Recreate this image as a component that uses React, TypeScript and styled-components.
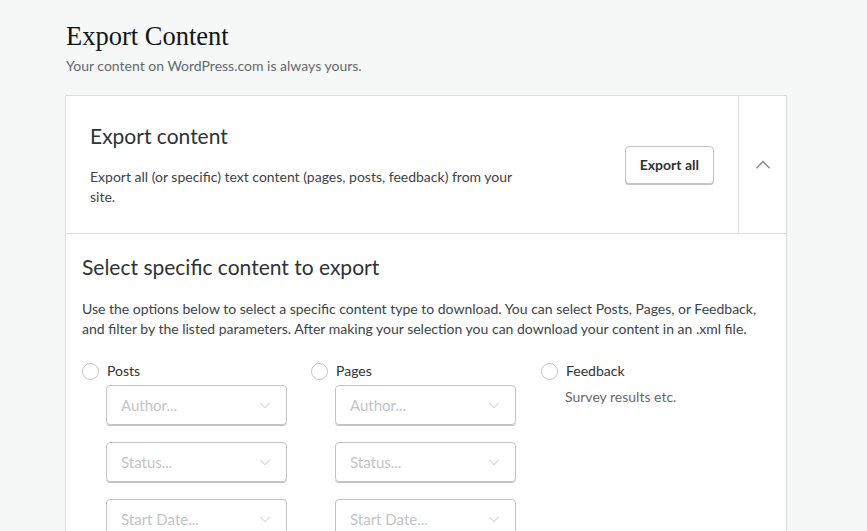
import React from "react";
import styled, { createGlobalStyle } from "styled-components";

const Global = createGlobalStyle`
  html, body { margin: 0; padding: 0; background: #f6f7f7; }
  body { font-family: "Segoe UI", Lato, sans-serif; color: #3c434a; }
  * { box-sizing: border-box; }
`;

const Page = styled.div`
  padding: 20px 81px 0 65px;
`;

const PageHeader = styled.header`
  padding-left: 1px;
  margin-bottom: 19px;
`;

const PageTitle = styled.h1`
  margin: 0;
  font-family: "Liberation Serif", serif;
  font-weight: 400;
  font-size: 26.5px;
  line-height: 32px;
  color: #101517;
`;

const PageSub = styled.p`
  margin: 4px 0 0;
  font-size: 14px;
  line-height: 20px;
  color: #646970;
`;

const Card = styled.section`
  background: #fff;
  border: 1px solid #dcdcde;
  width: 722px;
`;

const Header = styled.div`
  display: flex;
  border-bottom: 1px solid #dcdcde;
  height: 138px;
`;

const HeaderMain = styled.div`
  flex: 1;
  display: flex;
  align-items: center;
  padding: 0 24px 0 24px;
`;

const HeaderText = styled.div`
  flex: 1;
  max-width: 440px;
`;

const CardTitle = styled.h2`
  margin: 0;
  font-weight: 400;
  font-size: 21px;
  line-height: 28px;
  color: #2c3338;
`;

const Desc = styled.p`
  margin: 17px 0 0;
  font-size: 14px;
  line-height: 20px;
  color: #3c434a;
`;

const Button = styled.button`
  font-family: inherit;
  font-size: 14px;
  font-weight: 700;
  color: #2c3338;
  background: #fff;
  border: 1px solid #c3c4c7;
  border-radius: 4px;
  box-shadow: 0 1px 0 #c3c4c7;
  height: 38px;
  padding: 0 14px;
  margin-left: auto;
`;

const Toggle = styled.div`
  width: 48px;
  border-left: 1px solid #dcdcde;
  display: flex;
  align-items: center;
  justify-content: center;
`;

const Body = styled.div`
  padding: 19px 16px 0 16px;
`;

const BodyText = styled.p`
  margin: 18px 0 0;
  font-size: 14px;
  line-height: 20px;
  color: #3c434a;
`;

const Columns = styled.div`
  display: grid;
  grid-template-columns: 229px 230px 1fr;
  margin-top: 22px;
`;

const Column = styled.div`
  display: flex;
  flex-direction: column;
`;

const RadioRow = styled.label`
  display: flex;
  align-items: center;
  gap: 8px;
  font-size: 14px;
  line-height: 20px;
  color: #2c3338;
`;

const Radio = styled.span`
  width: 17px;
  height: 17px;
  border: 1px solid #c3c4c7;
  border-radius: 50%;
  background: #fff;
`;

const Hint = styled.div`
  margin: 6px 0 0 24px;
  font-size: 14px;
  line-height: 20px;
  color: #646970;
`;

const Selects = styled.div`
  display: flex;
  flex-direction: column;
  gap: 17px;
  margin: 4px 0 0 24px;
`;

const Select = styled.div`
  width: 181px;
  height: 40px;
  border: 1px solid #c3c4c7;
  border-radius: 4px;
  box-shadow: 0 1px 0 #c3c4c7;
  display: flex;
  align-items: center;
  justify-content: space-between;
  padding: 0 13px 0 14px;
  font-size: 15px;
  color: #c3c4c7;
`;

const Chevron = ({ up }: { up?: boolean }) => (
  <svg width={up ? 20 : 16} height={up ? 20 : 16} viewBox="0 0 24 24" fill="none">
    <path
      d={up ? "M4 16l8-8 8 8" : "M5 9l7 7 7-7"}
      stroke={up ? "#8c8f94" : "#dcdcde"}
      strokeWidth={1.8}
    />
  </svg>
);

const Field = ({ label }: { label: string }) => (
  <Select>
    <span>{label}</span>
    <Chevron />
  </Select>
);

const filters = ["Author...", "Status...", "Start Date..."];

export default function App() {
  return (
    <>
      <Global />
      <Page>
        <PageHeader>
          <PageTitle>Export Content</PageTitle>
          <PageSub>Your content on WordPress.com is always yours.</PageSub>
        </PageHeader>
        <Card>
          <Header>
            <HeaderMain>
              <HeaderText>
                <CardTitle>Export content</CardTitle>
                <Desc>
                  Export all (or specific) text content (pages, posts, feedback) from your site.
                </Desc>
              </HeaderText>
              <Button>Export all</Button>
            </HeaderMain>
            <Toggle>
              <Chevron up />
            </Toggle>
          </Header>
          <Body>
            <CardTitle>Select specific content to export</CardTitle>
            <BodyText>
              Use the options below to select a specific content type to download. You can select
              Posts, Pages, or Feedback, and filter by the listed parameters. After making your
              selection you can download your content in an .xml file.
            </BodyText>
            <Columns>
              <Column>
                <RadioRow>
                  <Radio />
                  Posts
                </RadioRow>
                <Selects>
                  {filters.map((f) => (
                    <Field key={f} label={f} />
                  ))}
                </Selects>
              </Column>
              <Column>
                <RadioRow>
                  <Radio />
                  Pages
                </RadioRow>
                <Selects>
                  {filters.map((f) => (
                    <Field key={f} label={f} />
                  ))}
                </Selects>
              </Column>
              <Column>
                <RadioRow>
                  <Radio />
                  Feedback
                </RadioRow>
                <Hint>Survey results etc.</Hint>
              </Column>
            </Columns>
          </Body>
        </Card>
      </Page>
    </>
  );
}
